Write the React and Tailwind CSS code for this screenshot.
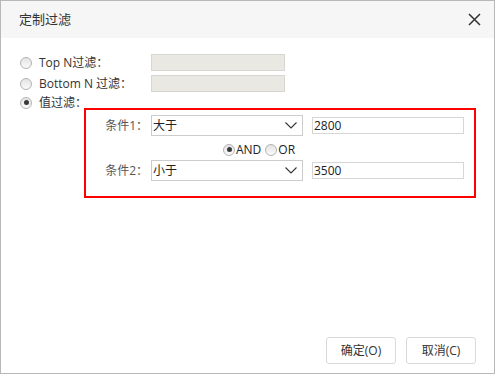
import React from "react";

const font = { fontFamily: '"Open Sans", "Noto Sans CJK SC", sans-serif' };

function Radio({ checked }) {
  return (
    <span className="relative inline-flex h-[12px] w-[12px] shrink-0 items-center justify-center rounded-full border border-[#b3b3b3] bg-gradient-to-b from-[#e4e4e4] to-[#fafafa]">
      {checked && <span className="h-[5px] w-[5px] rounded-full bg-[#3a3a3a]" />}
    </span>
  );
}

function Chevron() {
  return (
    <svg width="12" height="7" viewBox="0 0 12 7" fill="none">
      <path d="M0.5 0.5 L6 6 L11.5 0.5" stroke="#333" strokeWidth="1.1" />
    </svg>
  );
}

function CondRow({ label, op, value }) {
  return (
    <div className="flex h-[21px] items-center">
      <div className="w-[62px] text-right text-[12px] text-[#555]">{label}</div>
      <div className="ml-[3px] flex h-[21px] w-[152px] items-center justify-between border border-[#ccc] bg-white pl-[1px] pr-[5px] text-[12px] text-[#222]">
        <span>{op}</span>
        <Chevron />
      </div>
      <div className="ml-[9px] flex h-[17px] w-[152px] items-center border border-[#d6d6d6] bg-white pl-[1px] text-[12px] text-[#222]">
        {value}
      </div>
    </div>
  );
}

export default function App() {
  return (
    <div style={font} className="flex h-[374px] w-[495px] flex-col border border-[#b8b8b8] bg-white text-[#333]">
      <div className="flex h-[37px] shrink-0 items-center justify-between bg-[#f6f6f6] pl-[18px] pr-[13px]">
        <span className="text-[13px] text-[#333]">定制过滤</span>
        <svg width="13" height="13" viewBox="0 0 13 13">
          <path d="M1 1 L12 12 M12 1 L1 12" stroke="#333" strokeWidth="1.5" />
        </svg>
      </div>
      <div className="flex flex-1 flex-col pt-[14px]">
        <div className="flex h-[21px] items-center pl-[19px]">
          <Radio />
          <span className="ml-[7px] w-[112px] text-[12px]">Top N过滤：</span>
          <div className="h-[17px] w-[134px] border border-[#d8d6d0] bg-[#e9e8e2]" />
        </div>
        <div className="flex h-[21px] items-center pl-[19px]">
          <Radio />
          <span className="ml-[7px] w-[112px] text-[12px]">Bottom N 过滤：</span>
          <div className="h-[17px] w-[134px] border border-[#d8d6d0] bg-[#e9e8e2]" />
        </div>
        <div className="flex h-[14px] items-center pl-[19px] pt-[3px]">
          <Radio checked />
          <span className="ml-[7px] text-[12px]">值过滤：</span>
        </div>
        <div className="ml-[83px] flex h-[90px] w-[392px] flex-col border-2 border-[#f00] pt-[5px]">
          <CondRow label="条件1：" op="大于" value="2800" />
          <div className="flex h-[24px] items-center pl-[137px] pt-[3px] text-[12px] text-[#222]">
            <Radio checked />
            <span className="ml-[1px]">AND</span>
            <span className="ml-[4px] flex"><Radio /></span>
            <span className="ml-[1px]">OR</span>
          </div>
          <CondRow label="条件2：" op="小于" value="3500" />
        </div>
        <div className="flex-1" />
        <div className="flex justify-end gap-[10px] pb-[9px] pr-[18px]">
          <button className="h-[27px] w-[70px] rounded-[3px] border border-[#d9d9d9] bg-white text-[12px] text-[#333]">确定(O)</button>
          <button className="h-[27px] w-[70px] rounded-[3px] border border-[#d9d9d9] bg-white text-[12px] text-[#333]">取消(C)</button>
        </div>
      </div>
    </div>
  );
}
